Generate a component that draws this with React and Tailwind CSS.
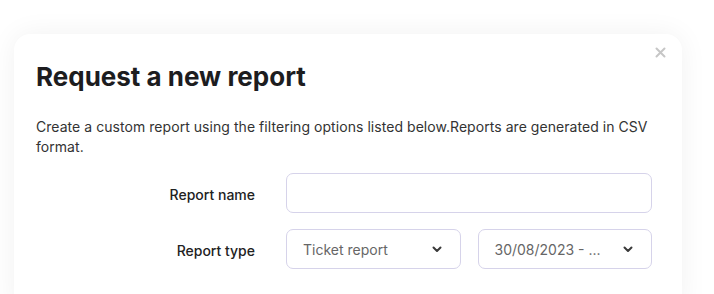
import React from 'react';

function Chevron() {
  return (
    <svg width="12" height="12" viewBox="0 0 12 12" className="text-[#3a3a3a]">
      <path d="M2.5 4.5 L6 8 L9.5 4.5" fill="none" stroke="currentColor" strokeWidth="2" strokeLinecap="round" strokeLinejoin="round" />
    </svg>
  );
}

function SelectBox({ value }) {
  return (
    <div className="flex-1 h-[40px] border border-[#d6d3ea] rounded-[7px] flex items-center justify-between pl-4 pr-[17px] text-[14px] text-[#666666]">
      <span>{value}</span>
      <Chevron />
    </div>
  );
}

export default function App() {
  return (
    <div className="w-[714px] h-[294px] overflow-hidden bg-white pt-[34px] pl-[14px] pr-[32px]" style={{ fontFamily: 'Inter, "Noto Sans", sans-serif' }}>
      <div className="relative bg-white rounded-t-[16px] shadow-[0_0_28px_rgba(0,0,0,0.06)] pt-[27px] pl-[22px] pr-[20px] pb-10">
        <button className="absolute top-[13px] right-[16px] w-[11px] h-[11px] flex items-center justify-center">
          <svg width="11" height="11" viewBox="0 0 11 11">
            <path d="M1.5 1.5 L9.5 9.5 M9.5 1.5 L1.5 9.5" stroke="#c6c6c6" strokeWidth="2" strokeLinecap="round" />
          </svg>
        </button>

        <h2 className="text-[26px] leading-[32px] font-bold text-[#1d1d1f]">Request a new report</h2>

        <p className="mt-6 text-[14px] leading-[20px] text-[#333333] tracking-[0.05px]">
          Create a custom report using the filtering options listed below.Reports are generated in CSV format.
        </p>

        <div className="mt-4 flex flex-col gap-4">
          <div className="flex items-center">
            <label className="w-[219px] pt-[3px] text-right text-[14px] font-medium text-[#222222]">Report name</label>
            <div className="ml-[31px] w-[366px] h-[40px] border border-[#d6d3ea] rounded-[7px]" />
          </div>
          <div className="flex items-center">
            <label className="w-[219px] pt-[3px] text-right text-[14px] font-medium text-[#222222]">Report type</label>
            <div className="ml-[31px] w-[366px] flex gap-[17px]">
              <SelectBox value="Ticket report" />
              <SelectBox value="30/08/2023 - ..." />
            </div>
          </div>
        </div>
      </div>
    </div>
  );
}
